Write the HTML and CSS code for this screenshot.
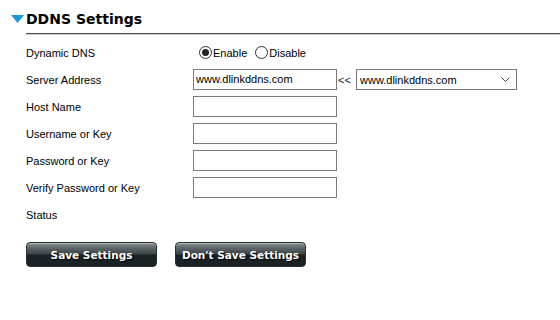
FILE: index.html
```html
<!DOCTYPE html>
<html lang="en">
<head>
  <meta charset="UTF-8" />
  <title>DDNS Settings</title>
  <link rel="stylesheet" href="styles.css">
</head>
<body>

  <!-- Judul bagian -->
  <div class="section-head">
    <svg class="arrow" width="13" height="8" viewBox="0 0 13 8"><polygon points="0,0 13,0 6.5,8" fill="#1a98dc"/></svg>
    <span class="title">DDNS Settings</span>
  </div>
  <div class="rule"></div>

  <!-- Form -->
  <div class="form">
    <div class="row">
      <label>Dynamic DNS</label>
      <div class="radios">
        <span class="radio checked"></span><span class="opt">Enable</span>
        <span class="radio"></span><span class="opt">Disable</span>
      </div>
    </div>
    <div class="row">
      <label>Server Address</label>
      <div class="ctrl">
        <div class="field">www.dlinkddns.com</div>
        <span class="arrows">&lt;&lt;</span>
        <div class="select">
          <span>www.dlinkddns.com</span>
          <svg width="9" height="5" viewBox="0 0 9 5"><polyline points="0.5,0.5 4.5,4.5 8.5,0.5" fill="none" stroke="#444" stroke-width="1"/></svg>
        </div>
      </div>
    </div>
    <div class="row">
      <label>Host Name</label>
      <div class="field"></div>
    </div>
    <div class="row">
      <label>Username or Key</label>
      <div class="field"></div>
    </div>
    <div class="row">
      <label>Password or Key</label>
      <div class="field"></div>
    </div>
    <div class="row">
      <label>Verify Password or Key</label>
      <div class="field"></div>
    </div>
    <div class="row">
      <label>Status</label>
      <div></div>
    </div>
  </div>

  <div class="buttons">
    <button class="btn save">Save Settings</button>
    <button class="btn nosave">Don't Save Settings</button>
  </div>

</body>
</html>
```

FILE: styles.css
```css
/* Dasar */
* {
  box-sizing: border-box;
}
body {
  margin: 0;
  background: #fff;
  font-family: "Liberation Sans", Arial, sans-serif;
  font-size: 11px;
  color: #000;
}

/* Judul */
.section-head {
  display: flex;
  align-items: flex-start;
  padding: 11px 0 0 11px;
  height: 33px;
}
.arrow {
  margin-top: 4px;
  margin-right: 2px;
}
.title {
  font-family: "DejaVu Sans", Verdana, sans-serif;
  font-weight: bold;
  font-size: 14px;
  line-height: 16px;
}
.rule {
  margin-left: 26px;
  height: 2px;
  border-top: 1px solid #4a4a4a;
  border-bottom: 1px solid #cfcfcf;
}

/* Baris form */
.form {
  padding: 4px 0 0 26px;
}
.row {
  display: grid;
  grid-template-columns: 167px auto;
  align-items: center;
  height: 27px;
}
.row label {
  line-height: 14px;
}
.ctrl {
  display: flex;
  align-items: center;
}

.radios {
  display: flex;
  align-items: center;
  padding-left: 6px;
}
.radio {
  width: 13px;
  height: 13px;
  border: 1px solid #333;
  border-radius: 50%;
  position: relative;
  margin-right: 1px;
}
.radio.checked::after {
  content: "";
  position: absolute;
  left: 2px; top: 2px;
  width: 7px; height: 7px;
  border-radius: 50%;
  background: #222;
}
.opt {
  margin-right: 8px;
}

.field {
  width: 144px;
  height: 21px;
  border: 1px solid #7a7a7a;
  padding: 0 2px;
  line-height: 19px;
  font-size: 11px;
}
.arrows {
  width: 19px;
  padding-left: 1px;
  color: #222;
}
.select {
  width: 161px;
  height: 21px;
  border: 1px solid #7a7a7a;
  display: flex;
  align-items: center;
  justify-content: space-between;
  padding: 0 6px 0 3px;
}

/* Tombol */
.buttons {
  display: flex;
  gap: 18px;
  padding: 14px 0 0 26px;
}
.btn {
  height: 25px;
  border: 1px solid #2a2f31;
  border-radius: 4px;
  color: #fff;
  font-family: "DejaVu Sans", Verdana, sans-serif;
  font-weight: bold;
  font-size: 10.5px;
  text-shadow: 1px 1px 1px #000;
  background: linear-gradient(#8a9396 0%, #5f686c 20%, #3c4448 48%, #1c2327 52%, #1a2226 100%);
  box-shadow: inset 0 1px 0 rgba(255,255,255,0.35);
  cursor: pointer;
  padding: 0;
}
.save {
  width: 131px;
}
.nosave {
  width: 131px;
}
```
